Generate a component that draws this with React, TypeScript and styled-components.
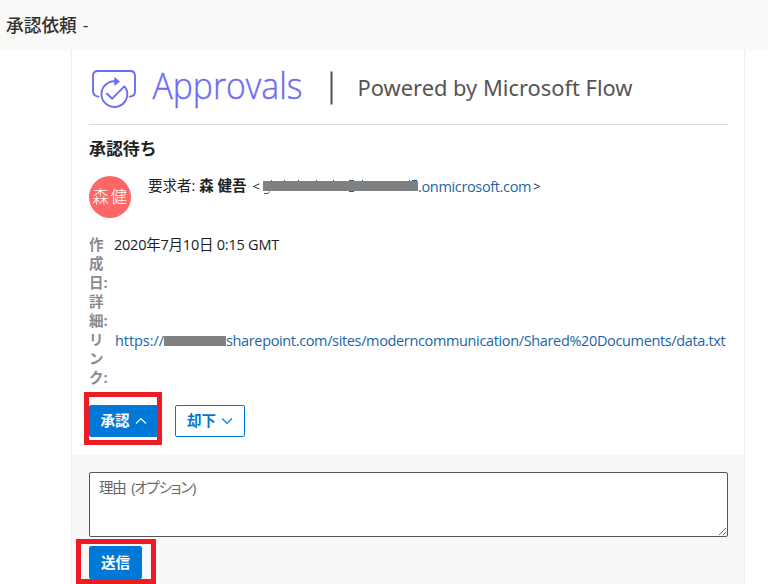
import React from "react";
import styled, { createGlobalStyle, css } from "styled-components";

const Global = createGlobalStyle`
  * { box-sizing: border-box; }
  html, body { margin: 0; background: #fff; }
  body {
    font-family: "Open Sans", "Noto Sans CJK JP", sans-serif;
    font-size: 14.5px;
    color: #212121;
    height: 584px;
    overflow: hidden;
  }
`;

const Header = styled.header`
  height: 50px;
  padding-left: 6px;
  background: #faf9f8;
  color: #323130;
  font-size: 17.7px;
  font-weight: 500;
  line-height: 50px;
  word-spacing: 1.5px;
`;

const Card = styled.main`
  width: 674px;
  height: 534px;
  margin-left: 71px;
  border: solid #efefef;
  border-width: 0 1px;
  display: flex;
  flex-direction: column;
`;

const Body = styled.section`
  height: 405px;
  padding: 0 16px 0 17px;
`;

const Banner = styled.div`
  height: 75px;
  border-bottom: 1px solid #dcdcdc;
  svg { display: block; }
`;

const Title = styled.h1`
  margin: 12px 0 0;
  font-size: 16.9px;
  font-weight: 700;
  line-height: 24px;
`;

const Requester = styled.div`
  display: flex;
  margin-top: 15px;
  height: 59px;
`;

const Avatar = styled.div`
  width: 42px;
  height: 42px;
  border-radius: 50%;
  background: #ff6666;
  color: #fff;
  font-size: 16.5px;
  font-weight: 300;
  letter-spacing: 1.8px;
  line-height: 41px;
  text-align: center;
  text-indent: 1px;
  white-space: nowrap;
`;

const RequesterText = styled.div`
  display: flex;
  align-items: center;
  height: 20px;
  margin-left: 17px;
  white-space: nowrap;
`;

const Jp = styled.span<{ $bold?: boolean; $gap?: number }>`
  font-weight: ${(p) => (p.$bold ? 700 : 400)};
  line-height: 20px;
  margin-right: ${(p) => p.$gap ?? 0}px;
`;

const Angle = styled.span<{ $gap?: number }>`
  font-size: 13px;
  margin: 0 ${(p) => p.$gap ?? 0}px 0 2px;
`;

const Link = styled.a<{ $spacing: number }>`
  display: flex;
  align-items: center;
  color: #1a66a5;
  text-decoration: none;
  letter-spacing: ${(p) => p.$spacing}px;
`;

const Redaction = styled.span<{ $w: number }>`
  display: block;
  flex: none;
  width: ${(p) => p.$w}px;
  height: 10px;
  background: #808080;
  svg { display: block; overflow: visible; }
`;

const Facts = styled.dl`
  display: grid;
  grid-template-columns: 20px 1fr;
  column-gap: 5px;
  margin: 0;
  line-height: 19px;
`;

const FactName = styled.dt`
  color: #8a8a8f;
  font-weight: 700;
  span { display: block; white-space: nowrap; }
`;

const FactValue = styled.dd<{ $spacing?: number }>`
  margin: 0;
  letter-spacing: ${(p) => p.$spacing ?? 0}px;
  white-space: nowrap;
`;

const LinkValue = styled(FactValue)`
  display: flex;
  align-items: flex-start;
  padding: 1px 0 0 1px;
`;

const Actions = styled.div`
  display: flex;
  gap: 13px;
  margin: 5px 0 0 -5px;
`;

const Highlight = styled.div`
  border: 5px solid #ed1c24;
  flex: none;
`;

const ApproveMark = styled(Highlight)`
  width: 78px;
  height: 53px;
  padding-top: 8px;
`;

const SendMark = styled(Highlight)`
  width: 80px;
  height: 45px;
  margin: 2px 0 0 -13px;
  padding: 2px 0 0 8px;
`;

const Button = styled.button<{ $primary?: boolean; $w: number; $h: number }>`
  display: flex;
  align-items: center;
  justify-content: center;
  gap: 5px;
  width: ${(p) => p.$w}px;
  height: ${(p) => p.$h}px;
  padding: 0;
  border: 1px solid #0078d7;
  border-radius: 2px;
  background: #fff;
  color: #0078d7;
  font: inherit;
  font-weight: 700;
  line-height: 20px;
  ${(p) => p.$primary && css`background: #0078d7; color: #fff;`}
`;

const Reject = styled.div`
  padding-top: 13px;
`;

const ReplyPanel = styled.section`
  flex: 1;
  padding: 17px 16px 0 17px;
  background: #f8f8f8;
`;

const Reason = styled.textarea`
  display: block;
  width: 639px;
  height: 65px;
  padding: 5px 9px;
  border: 1px solid #555;
  border-radius: 2px;
  background: #fff;
  font: inherit;
  font-feature-settings: "palt";
  letter-spacing: -1.2px;
  word-spacing: 3px;
  line-height: 20px;
  outline: none;
  resize: vertical;
  &::placeholder { color: #666; opacity: 1; }
`;

const Chevron = ({ up }: { up?: boolean }) => (
  <svg width="12" height="8" viewBox="0 0 12 8" fill="none" stroke="currentColor" strokeWidth="1.1">
    <path d={up ? "M1 6.5 6 1.5l5 5" : "M1 1.5l5 5 5-5"} />
  </svg>
);

const Logo = () => (
  <svg width="639" height="74" viewBox="0 0 639 74">
    <g fill="none" stroke="#6b6df6" strokeWidth="1.9" strokeLinecap="round" strokeLinejoin="round">
      <path d="M9.500 46.600C6 46.200 4 45 4 41V26q0-5 5-5h32q5 0 5 5v15.500c0 3.500-2 5-5.300 5.100" />
      <path d="M27 31.300A12.900 12.900 0 1 0 37 38.500L35.300 36.400 23.200 48.700l-5.200-5" />
    </g>
    <path d="M25.300 27 31 31.400 25.300 36z" fill="#6b6df6" />
    <text x="63.500" y="49" textLength="150" lengthAdjust="spacingAndGlyphs" fontFamily="Open Sans" fontSize="36" fontWeight="300" fill="#6b6df6" stroke="#6b6df6" strokeWidth="0.4">Approvals</text>
    <rect x="241.500" y="21.500" width="2" height="33" fill="#505050" />
    <text x="268.500" y="46" textLength="275" lengthAdjust="spacingAndGlyphs" fontFamily="Noto Sans" fontSize="22.500" fill="#555">Powered by Microsoft Flow</text>
  </svg>
);

export default function App() {
  return (
    <>
      <Global />
      <Header>承認依頼 -</Header>
      <Card>
        <Body>
          <Banner><Logo /></Banner>
          <Title>承認待ち</Title>
          <Requester>
            <Avatar>森健</Avatar>
            <RequesterText>
              <Jp $gap={4}>要求者:</Jp>
              <Jp $bold $gap={4}>森 健吾</Jp>
              <Angle $gap={3}>&lt;</Angle>
              <Link $spacing={-0.35}>
                <Redaction $w={155}>
                  <svg width="155" height="10" viewBox="0 0 155 10" stroke="#1a66a5" fill="none">
                    <path d="M1 12.500h4l1.500-2M8.500-1v1M21.500-1v1M35.500-1v1M53.500-1v1M70.500-1v1M86-.5h5M86 10.500h5M99.500-1v1M146.500-1v1M149-.5h5" />
                  </svg>
                </Redaction>
                .onmicrosoft.com
              </Link>
              <Angle>&gt;</Angle>
            </RequesterText>
          </Requester>
          <Facts>
            <FactName><span>作</span><span>成</span><span>日:</span></FactName>
            <FactValue $spacing={-0.23}>2020年7月10日 0:15 GMT</FactValue>
            <FactName><span>詳</span><span>細:</span></FactName>
            <FactValue />
            <FactName><span>リ</span><span>ン</span><span>ク:</span></FactName>
            <LinkValue>
              <Link $spacing={-0.06}>https://</Link>
              <Link $spacing={-0.355}>
                <Redaction $w={62} />sharepoint.com/sites/moderncommunication/Shared%20Documents/data.txt
              </Link>
            </LinkValue>
          </Facts>
          <Actions>
            <ApproveMark>
              <Button $primary $w={69} $h={32}>承認 <Chevron up /></Button>
            </ApproveMark>
            <Reject>
              <Button $w={70} $h={32}>却下 <Chevron /></Button>
            </Reject>
          </Actions>
        </Body>
        <ReplyPanel>
          <Reason placeholder="理由 (オプション)" />
          <SendMark>
            <Button $primary $w={53} $h={33}>送信</Button>
          </SendMark>
        </ReplyPanel>
      </Card>
    </>
  );
}
